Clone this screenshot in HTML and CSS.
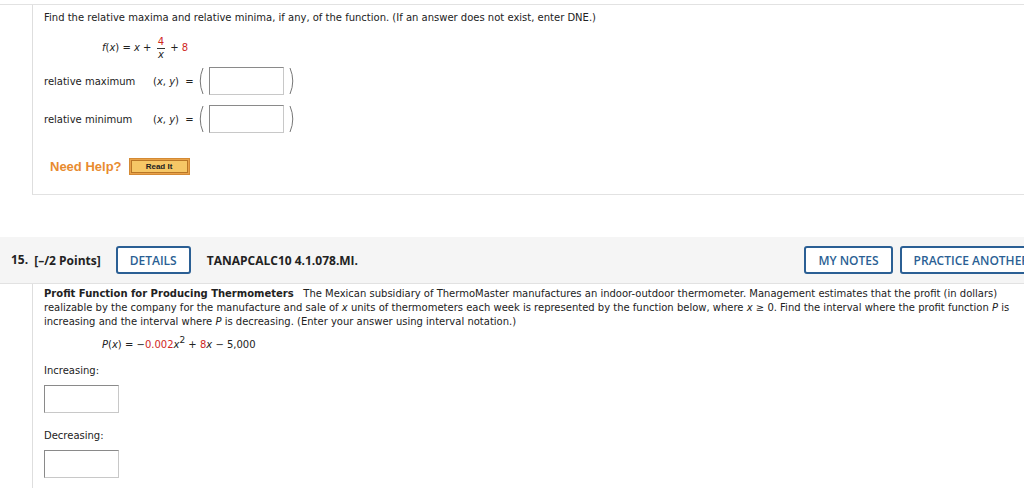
FILE: index.html
```html
<!DOCTYPE html>
<html>
<head>
<meta charset="utf-8">
<link rel="stylesheet" href="styles.css">
</head>
<body>
<div class="top-wrap">
  <div class="card card-top">
    <p class="prompt">Find the relative maxima and relative minima, if any, of the function. (If an answer does not exist, enter DNE.)</p>
    <div class="formula f1"><i>f</i>(<i>x</i>) = <i>x</i> + <span class="frac"><span class="num red">4</span><span class="den"><i>x</i></span></span> + <span class="red">8</span></div>
    <div class="ans-row">
      <span class="ans-label">relative maximum</span>
      <span class="xy">(<i>x</i>, <i>y</i>) &nbsp;=</span>
      <svg class="paren" width="8" height="28" viewBox="0 0 8 28"><path d="M6 1 Q0.5 14 6 27" fill="none" stroke="#777" stroke-width="1"/></svg>
      <span class="box"></span>
      <svg class="paren" width="8" height="28" viewBox="0 0 8 28"><path d="M2 1 Q7.5 14 2 27" fill="none" stroke="#777" stroke-width="1"/></svg>
    </div>
    <div class="ans-row">
      <span class="ans-label">relative minimum</span>
      <span class="xy">(<i>x</i>, <i>y</i>) &nbsp;=</span>
      <svg class="paren" width="8" height="28" viewBox="0 0 8 28"><path d="M6 1 Q0.5 14 6 27" fill="none" stroke="#777" stroke-width="1"/></svg>
      <span class="box"></span>
      <svg class="paren" width="8" height="28" viewBox="0 0 8 28"><path d="M2 1 Q7.5 14 2 27" fill="none" stroke="#777" stroke-width="1"/></svg>
    </div>
    <div class="help">
      <span class="need">Need Help?</span>
      <span class="readit"><span class="readit-in">Read It</span></span>
    </div>
  </div>
</div>

<div class="qbar">
  <span class="qnum">15.</span>
  <span class="qpts">[–/2 Points]</span>
  <span class="btn">DETAILS</span>
  <span class="qid">TANAPCALC10 4.1.078.MI.</span>
  <span class="spacer"></span>
  <span class="btn">MY NOTES</span>
  <span class="btn btn-wide">PRACTICE ANOTHER</span>
</div>

<div class="card card-bottom">
  <p class="prob"><b>Profit Function for Producing Thermometers</b>&nbsp;&nbsp; The Mexican subsidiary of ThermoMaster manufactures an indoor-outdoor thermometer. Management estimates that the profit (in dollars) realizable by the company for the manufacture and sale of <i>x</i> units of thermometers each week is represented by the function below, where <i>x</i> ≥ 0. Find the interval where the profit function <i>P</i> is increasing and the interval where <i>P</i> is decreasing. (Enter your answer using interval notation.)</p>
  <div class="formula f2"><i>P</i>(<i>x</i>) = −<span class="red">0.002</span><i>x</i><sup>2</sup> + <span class="red">8</span><i>x</i> − 5,000</div>
  <div class="lbl">Increasing:</div>
  <div class="box box2"></div>
  <div class="lbl lbl2">Decreasing:</div>
  <div class="box box2"></div>
</div>
</body>
</html>
```

FILE: styles.css
```css
html, body {
  margin: 0;
  padding: 0;
  background: #fff;
  width: 1024px;
  overflow: hidden;
}
body {
  font-family: "DejaVu Sans", Verdana, sans-serif;
  font-size: 10px;
  color: #222;
}
.top-wrap {
  margin-top: 4px;
  border-top: 1px solid #e2e2e2;
}
.card {
  margin-left: 32px;
  border-left: 1px solid #dedede;
  padding-left: 11px;
}
.card-top {
  height: 183px;
  border-bottom: 1px solid #e2e2e2;
  padding-top: 6px;
  box-sizing: content-box;
}
.prompt {
  margin: 0;
  line-height: 14px;
}
.red { color: #d0281e; }
.f1 {
  margin-left: 58px;
  margin-top: 8px;
  height: 30px;
  line-height: 30px;
}
.frac {
  display: inline-flex;
  flex-direction: column;
  align-items: center;
  vertical-align: middle;
  margin: 0 2px;
  line-height: 12px;
}
.frac .num {
  padding: 0 1px;
  border-bottom: 1px solid #333;
}
.ans-row {
  display: flex;
  align-items: center;
  height: 28px;
}
.ans-row + .ans-row { margin-top: 10px; }
.f1 + .ans-row { margin-top: 4px; }
.ans-label { width: 109px; }
.xy { width: 44px; }
.paren { display: block; }
.box {
  display: block;
  width: 73px;
  height: 26px;
  border: 1px solid #8a8a8a;
  border-right-color: #c8c8c8;
  border-bottom-color: #c8c8c8;
  background: #fff;
  margin: 0 4px;
}
.help {
  display: flex;
  align-items: center;
  margin-top: 25px;
  margin-left: 6px;
}
.need {
  font-family: "Liberation Sans", Arial, sans-serif;
  font-weight: bold;
  font-size: 13px;
  color: #e88b2f;
}
.readit {
  margin-left: 7px;
  display: block;
  width: 57px;
  height: 13px;
  border: 1px solid #d48a34;
  background: #e8a24a;
  padding: 1px;
  box-sizing: content-box;
}
.readit-in {
  display: block;
  height: 11px;
  border: 1px solid #b97626;
  background: #f6c766;
  font-family: "Liberation Sans", Arial, sans-serif;
  font-weight: bold;
  font-size: 8px;
  line-height: 11px;
  text-align: center;
  color: #222;
}
.qbar {
  margin-top: 42px;
  height: 46px;
  background: #f5f5f5;
  border-bottom: 1px solid #e2e2e2;
  display: flex;
  align-items: center;
  font-family: "Open Sans", sans-serif;
  font-size: 12px;
  color: #222;
  padding-left: 11px;
}
.qnum { font-weight: 700; margin-top: -2px; }
.qpts { font-weight: 700; margin-left: 6px; }
.btn {
  display: flex;
  align-items: center;
  justify-content: center;
  height: 24px;
  padding: 0 12px;
  border: 2px solid #2b5f94;
  border-radius: 3px;
  color: #2b5f94;
  font-weight: 600;
  background: #fff;
  box-sizing: content-box;
}
.qpts + .btn { margin-left: 15px; width: 47px; }
.qid { font-weight: 700; margin-left: 16px; }
.spacer { flex: 1; }
.btn-wide { margin-left: 7px; margin-right: -19px; white-space: nowrap; }
.card-bottom {
  padding-top: 3px;
  height: 205px;
}
.prob {
  margin: 0;
  width: 975px;
  line-height: 14px;
}
.f2 {
  margin-left: 58px;
  margin-top: 10px;
}
.f2 sup { font-size: 9px; line-height: 0; vertical-align: 5px; }
.lbl { margin-top: 15px; }
.lbl2 { margin-top: 17px; }
.box2 { margin: 9px 0 0 0; }
```
